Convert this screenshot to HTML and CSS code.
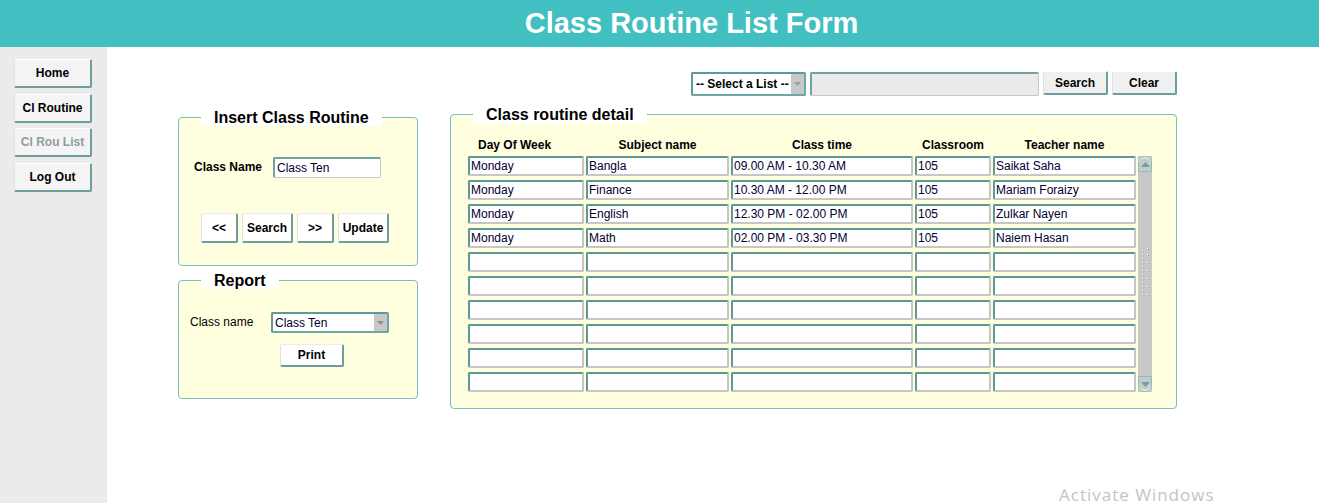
FILE: index.html
```html
<!DOCTYPE html>
<html lang="en">
<head>
<meta charset="utf-8">
<title>Class Routine List Form</title>
<link rel="stylesheet" href="styles.css">
</head>
<body>
<header class="banner"><h1 class="banner-title">Class Routine List Form</h1></header>
<div class="page">
  <nav class="side">
    <button class="side-btn">Home</button>
    <button class="side-btn">Cl Routine</button>
    <button class="side-btn is-disabled">Cl Rou List</button>
    <button class="side-btn">Log Out</button>
  </nav>
  <main class="main">
    <div class="toolbar">
      <div class="combo combo-list">
        <span class="combo-text">-- Select a List --</span>
        <span class="combo-arrow"><svg width="7" height="4" viewBox="0 0 7 4"><path d="M0 0H7L3.5 4Z" fill="#9c9c9c"/></svg></span>
      </div>
      <input class="search-input" type="text">
      <button class="tool-btn">Search</button>
      <button class="tool-btn">Clear</button>
    </div>
    <div class="panels">
      <div class="left-col">
        <fieldset class="box box-insert">
          <legend class="box-legend">Insert Class Routine</legend>
          <div class="insert-body">
            <div class="field-row">
              <label class="field-label is-bold">Class Name</label>
              <input class="field-input" type="text" value="Class Ten">
            </div>
            <div class="btn-row">
              <button class="form-btn w-nav">&lt;&lt;</button>
              <button class="form-btn w-wide">Search</button>
              <button class="form-btn w-nav">&gt;&gt;</button>
              <button class="form-btn w-wide">Update</button>
            </div>
          </div>
        </fieldset>
        <fieldset class="box box-report">
          <legend class="box-legend">Report</legend>
          <div class="report-body">
            <div class="field-row">
              <label class="field-label report-label">Class name</label>
              <div class="combo combo-report">
                <span class="combo-text is-normal">Class Ten</span>
                <span class="combo-arrow"><svg width="7" height="4" viewBox="0 0 7 4"><path d="M0 0H7L3.5 4Z" fill="#8f8f8f"/></svg></span>
              </div>
            </div>
            <div class="print-row"><button class="form-btn w-print">Print</button></div>
          </div>
        </fieldset>
      </div>
      <fieldset class="box box-detail">
        <legend class="box-legend">Class routine detail</legend>
        <div class="detail-body">
          <div class="grid-head">
            <span class="head-cell head-first">Day Of Week</span>
            <span class="head-cell">Subject name</span>
            <span class="head-cell">Class time</span>
            <span class="head-cell">Classroom</span>
            <span class="head-cell">Teacher name</span>
          </div>
          <div class="grid-body">
            <div class="scroll">
              <div class="scroll-btn scroll-up"><svg width="9" height="5" viewBox="0 0 9 5"><path d="M0 5H9L4.5 0Z" fill="#6f9f9f"/></svg></div>
              <div class="scroll-track">
                <svg class="grip" width="9" height="52" viewBox="0 0 9 52">
                  <g fill="#ffffff">
                    <rect x="0" y="2" width="1" height="1"/><rect x="0" y="10" width="1" height="1"/><rect x="0" y="18" width="1" height="1"/><rect x="0" y="26" width="1" height="1"/><rect x="0" y="34" width="1" height="1"/><rect x="0" y="42" width="1" height="1"/>
                    <rect x="5" y="0" width="1" height="1"/><rect x="5" y="6" width="1" height="1"/><rect x="5" y="14" width="1" height="1"/><rect x="5" y="22" width="1" height="1"/><rect x="5" y="30" width="1" height="1"/><rect x="5" y="38" width="1" height="1"/><rect x="5" y="46" width="1" height="1"/>
                  </g>
                  <g fill="#6aaeb0">
                    <rect x="1" y="3" width="1" height="1"/><rect x="1" y="11" width="1" height="1"/><rect x="1" y="19" width="1" height="1"/><rect x="1" y="27" width="1" height="1"/><rect x="1" y="35" width="1" height="1"/><rect x="1" y="43" width="1" height="1"/>
                    <rect x="6" y="1" width="1" height="1"/><rect x="6" y="7" width="1" height="1"/><rect x="6" y="15" width="1" height="1"/><rect x="6" y="23" width="1" height="1"/><rect x="6" y="31" width="1" height="1"/><rect x="6" y="39" width="1" height="1"/><rect x="6" y="47" width="1" height="1"/>
                  </g>
                </svg>
              </div>
              <div class="scroll-btn scroll-down"><svg width="9" height="5" viewBox="0 0 9 5"><path d="M0 0H9L4.5 5Z" fill="#6f9f9f"/></svg></div>
            </div>
            <input class="cell" value="Monday"><input class="cell" value="Bangla"><input class="cell" value="09.00 AM - 10.30 AM"><input class="cell" value="105"><input class="cell" value="Saikat Saha">
            <input class="cell" value="Monday"><input class="cell" value="Finance"><input class="cell" value="10.30 AM - 12.00 PM"><input class="cell" value="105"><input class="cell" value="Mariam Foraizy">
            <input class="cell" value="Monday"><input class="cell" value="English"><input class="cell" value="12.30 PM - 02.00 PM"><input class="cell" value="105"><input class="cell" value="Zulkar Nayen">
            <input class="cell" value="Monday"><input class="cell" value="Math"><input class="cell" value="02.00 PM - 03.30 PM"><input class="cell" value="105"><input class="cell" value="Naiem Hasan">
            <input class="cell"><input class="cell"><input class="cell"><input class="cell"><input class="cell">
            <input class="cell"><input class="cell"><input class="cell"><input class="cell"><input class="cell">
            <input class="cell"><input class="cell"><input class="cell"><input class="cell"><input class="cell">
            <input class="cell"><input class="cell"><input class="cell"><input class="cell"><input class="cell">
            <input class="cell"><input class="cell"><input class="cell"><input class="cell"><input class="cell">
            <input class="cell"><input class="cell"><input class="cell"><input class="cell"><input class="cell">
          </div>
        </div>
      </fieldset>
    </div>
  </main>
</div>
<div class="watermark">Activate Windows</div>
</body>
</html>
```

FILE: styles.css
```css
* { box-sizing: border-box; }

html, body {
  margin: 0;
  padding: 0;
  height: 503px;
  overflow: hidden;
  background: #ffffff;
  font-family: "Liberation Sans", Arial, sans-serif;
  font-size: 12px;
  color: #000000;
}

.banner {
  height: 47px;
  background: #41bfc1;
  display: flex;
  align-items: center;
  justify-content: center;
  padding-left: 64px;
}

.banner-title {
  margin: 0;
  color: #ffffff;
  font-size: 29px;
  font-weight: bold;
  line-height: 47px;
}

.page {
  display: flex;
  height: 456px;
}

.side {
  width: 107px;
  flex: none;
  background: #ebebeb;
  padding: 12px 0 0 14px;
  display: flex;
  flex-direction: column;
  gap: 5.5px;
}

.side-btn {
  width: 78px;
  height: 29px;
  background: #f4f4f4;
  border-style: solid;
  border-width: 1px 2px 2px 1px;
  border-color: #ffffff #6f9d9d #6f9d9d #e2e2e2;
  border-radius: 2px;
  font-family: "Liberation Sans", Arial, sans-serif;
  font-size: 12px;
  font-weight: bold;
  color: #000000;
  padding: 0;
}

.side-btn.is-disabled { color: #8c9ea0; }

.main {
  flex: 1;
  padding: 24px 146px 0 71px;
}

.toolbar {
  display: flex;
  justify-content: flex-end;
  align-items: flex-start;
  gap: 4px;
}

.combo {
  display: flex;
  align-items: stretch;
  background: #ffffff;
  border-style: solid;
  border-width: 2px;
  border-color: #5f9a9a #6fa6a6 #6fa6a6 #5f9a9a;
  border-radius: 2px;
}

.combo-text {
  flex: 1;
  display: flex;
  align-items: center;
  padding-left: 3px;
  font-weight: bold;
  white-space: nowrap;
}

.combo-text.is-normal { font-weight: normal; }

.combo-arrow {
  width: 13px;
  background: #c8c8c8;
  display: flex;
  align-items: center;
  justify-content: center;
}

.combo-list {
  width: 115px;
  height: 24px;
  margin-top: 1px;
}

.search-input {
  width: 229px;
  height: 24px;
  margin: 1px 0 0 0;
  background: #ebebeb;
  border-style: solid;
  border-width: 2px 1px 1px 2px;
  border-color: #6fa4a4 #c8c8c8 #c8c8c8 #6fa4a4;
  border-radius: 2px;
}

.tool-btn {
  width: 65px;
  height: 24px;
  background: #f0f0f0;
  border-style: solid;
  border-width: 1px 2px 2px 1px;
  border-color: #ffffff #6f9d9d #6f9d9d #e0e0e0;
  border-radius: 2px;
  font-family: "Liberation Sans", Arial, sans-serif;
  font-size: 12px;
  font-weight: bold;
  color: #000000;
  padding: 0;
}

.panels {
  display: flex;
  align-items: flex-start;
  gap: 32px;
  margin-top: 10px;
}

.left-col {
  width: 240px;
  margin-top: 3px;
  display: flex;
  flex-direction: column;
  gap: 6px;
}

.box {
  margin: 0;
  padding: 0;
  min-inline-size: 0;
  border: 1px solid #7cbdbd;
  border-radius: 4px;
  background: #ffffe0;
}

.box-legend {
  margin-left: 22px;
  padding: 0 13px;
  background: #ffffff;
  font-size: 16px;
  font-weight: bold;
  line-height: 17px;
  color: #000000;
}

.insert-body {
  padding: 31px 0 22px 15px;
}

.field-row {
  display: flex;
  align-items: center;
}

.field-label { white-space: nowrap; }
.field-label.is-bold { font-weight: bold; width: 79px; padding-bottom: 2px; }

.field-input {
  width: 108px;
  height: 21px;
  margin: 0;
  padding: 0 2px;
  background: #ffffff;
  border-style: solid;
  border-width: 2px 1px 1px 2px;
  border-color: #6fa4a4 #c8c8c8 #c8c8c8 #6fa4a4;
  border-radius: 2px;
  font-family: "Liberation Sans", Arial, sans-serif;
  font-size: 12px;
  color: #000033;
}

.btn-row {
  display: flex;
  gap: 4px;
  margin: 35px 0 0 7px;
}

.form-btn {
  height: 30px;
  background: #ffffff;
  border-style: solid;
  border-width: 1px 2px 2px 1px;
  border-color: #ececec #6f9d9d #6f9d9d #e0e0e0;
  border-radius: 2px;
  font-family: "Liberation Sans", Arial, sans-serif;
  font-size: 12px;
  font-weight: bold;
  color: #000000;
  padding: 0;
}

.w-nav { width: 37px; }
.w-wide { width: 51px; }
.w-print { width: 64px; height: 23px; }

.report-body {
  padding: 23px 0 31px 11px;
}

.report-label { width: 81px; padding-bottom: 2px; }

.combo-report {
  width: 118px;
  height: 21px;
}

.combo-report .combo-text { color: #000033; padding-left: 2px; }

.print-row {
  margin: 11px 0 0 90px;
}

.box-detail {
  width: 727px;
}

.detail-body {
  padding: 15px 0 16px 17px;
}

.grid-head,
.grid-body {
  display: grid;
  grid-template-columns: 116px 143px 182px 76px 143px 14px;
  column-gap: 2px;
}

.grid-head {
  height: 15px;
  margin-bottom: 3px;
}

.head-cell {
  font-weight: bold;
  line-height: 15px;
  text-align: center;
  white-space: nowrap;
}

.head-cell.head-first {
  text-align: left;
  padding-left: 10px;
}

.grid-body {
  grid-template-rows: repeat(10, 20px);
  row-gap: 4px;
}

.cell {
  width: 100%;
  height: 20px;
  margin: 0;
  padding: 0 1px;
  background: #ffffff;
  border-style: solid;
  border-width: 2px;
  border-color: #5f9898 #c6c6c6 #c6c6c6 #5f9898;
  border-radius: 2px;
  font-family: "Liberation Sans", Arial, sans-serif;
  font-size: 12px;
  color: #000033;
}

.scroll {
  grid-column: 6;
  grid-row: 1 / span 10;
  display: flex;
  flex-direction: column;
  background: #c8c8c8;
}

.scroll-btn {
  height: 16px;
  flex: none;
  background: #c9c9c9;
  border: 1px solid #84c0c0;
  display: flex;
  align-items: center;
  justify-content: center;
}

.scroll-up {
  border-radius: 7px 7px 0 0;
  box-shadow: inset 0 1px 0 #ffffff;
}

.scroll-down {
  border-radius: 0 0 7px 7px;
  box-shadow: inset 0 -1px 0 #ffffff;
}

.scroll-track {
  flex: 1;
  display: flex;
  align-items: center;
  justify-content: center;
  padding-left: 2px;
}

.watermark {
  position: absolute;
  left: 1059px;
  top: 483px;
  font-family: "Open Sans", "Noto Sans", sans-serif;
  font-size: 17px;
  letter-spacing: 1px;
  color: #c4c4c4;
  white-space: nowrap;
}
```
